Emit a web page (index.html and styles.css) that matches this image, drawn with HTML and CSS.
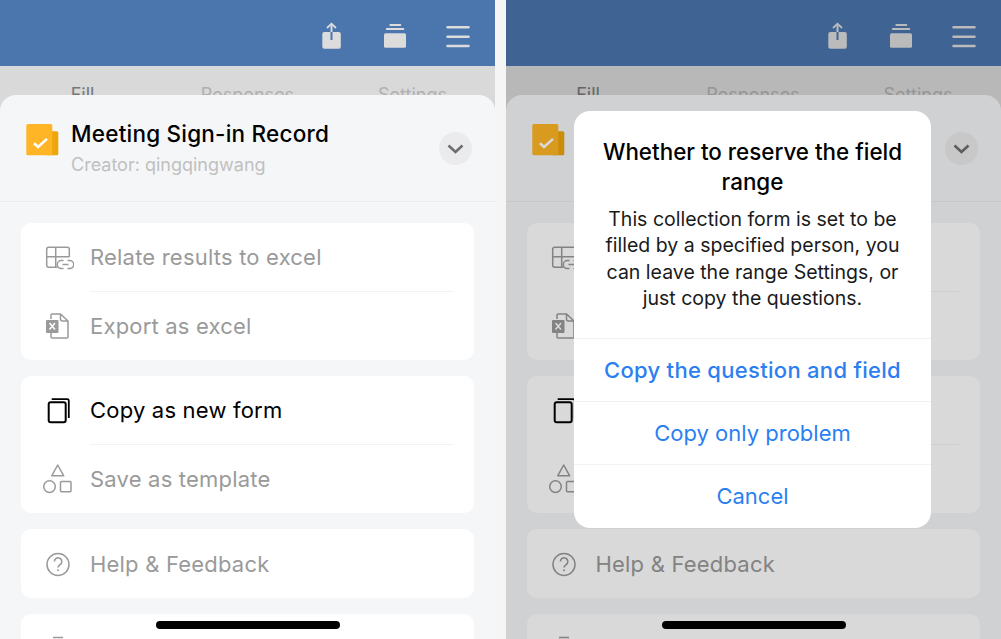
FILE: index.html
```html
<!DOCTYPE html>
<html lang="en">
<head>
<meta charset="utf-8">
<title>Meeting Sign-in Record</title>
<link rel="stylesheet" href="styles.css">
</head>
<body>
<svg class="sprite" xmlns="http://www.w3.org/2000/svg">
  <symbol id="i-share" viewBox="0 0 24 30">
    <rect x=".3" y="10" width="18.500" height="16.800" rx="2" fill="#dcdcdc"/>
    <path d="M9.500 2v8" stroke="#dcdcdc" stroke-width="2" fill="none"/>
    <path d="M9.500 10v8" stroke="currentColor" stroke-width="2" fill="none"/>
    <path d="M5 6l4.500-4.300L14 6" stroke="#dcdcdc" stroke-width="1.800" fill="none"/>
  </symbol>
  <symbol id="i-layers" viewBox="0 0 24 30">
    <rect x="0" y="11.300" width="22" height="14.500" rx="1.500" fill="#dcdcdc"/>
    <path d="M2.800 7h16.500M6.300 3h10" stroke="#dcdcdc" stroke-width="2" fill="none" stroke-linecap="round"/>
  </symbol>
  <symbol id="i-menu" viewBox="0 0 24 30">
    <path d="M1.500 5.300h21M1.500 14.700h21M1.500 24h21" stroke="#dcdcdc" stroke-width="2.500" fill="none" stroke-linecap="round"/>
  </symbol>
  <symbol id="i-doc" viewBox="0 0 33 32">
    <rect x="20" y="7.300" width="12.300" height="24" rx="1.500" fill="#eda60b"/>
    <rect x=".3" y="0" width="26" height="31.300" rx="1.500" fill="#ffb526"/>
    <path d="M8 19.300l4 3.600 9-8" stroke="#fff" stroke-width="2.600" fill="none"/>
  </symbol>
  <symbol id="i-chevron" viewBox="0 0 33 33">
    <path d="M9.500 13.500l7 6.500 7-6.500" stroke="currentColor" stroke-width="2.600" fill="none"/>
  </symbol>
  <symbol id="i-relate" viewBox="0 0 32 32">
    <path d="M15.500 26.300H6.700a2 2 0 0 1-2-2V8.300a2 2 0 0 1 2-2h18.600a2 2 0 0 1 2 2V16M4.700 15.700h22.600M13.700 6.300v20" stroke="currentColor" stroke-width="1.500" fill="none"/>
    <path d="M21.500 19.600h-2.200a4 4 0 0 0 0 8h2.200M25.500 19.600h2.200a4 4 0 0 1 0 8h-2.200M20.500 23.600h6" stroke="currentColor" stroke-width="1.500" fill="none"/>
  </symbol>
  <symbol id="i-export" viewBox="0 0 32 32">
    <path d="M9 9V5a1 1 0 0 1 1-1h8.500l7.500 7v16a1 1 0 0 1-1 1H10a1 1 0 0 1-1-1v-4M18.500 4v5a2 2 0 0 0 2 2H26" stroke="currentColor" stroke-width="1.500" fill="none"/>
    <rect x="4" y="10" width="12.500" height="13" rx="1" fill="currentColor"/>
    <path d="M7.500 13l5.500 6.500M13 13l-5.500 6.500" stroke="#fff" stroke-width="1.500" fill="none"/>
  </symbol>
  <symbol id="i-copy" viewBox="0 0 32 32">
    <rect x="6.700" y="8.300" width="17" height="20" rx="2" stroke="currentColor" stroke-width="2" fill="none"/>
    <path d="M9.700 5.200h15.600a1.500 1.500 0 0 1 1.500 1.500V24" stroke="currentColor" stroke-width="1.800" fill="none"/>
  </symbol>
  <symbol id="i-template" viewBox="0 0 32 32">
    <path d="M15.700 2l6 10.800h-12z" stroke="currentColor" stroke-width="1.500" fill="none" stroke-linejoin="round"/>
    <circle cx="7.500" cy="23.600" r="5.800" stroke="currentColor" stroke-width="1.500" fill="none"/>
    <rect x="18.500" y="18.500" width="10.500" height="10.300" rx="1" stroke="currentColor" stroke-width="1.500" fill="none"/>
  </symbol>
  <symbol id="i-help" viewBox="0 0 32 32">
    <circle cx="16" cy="16.500" r="11" stroke="currentColor" stroke-width="1.500" fill="none"/>
    <path d="M12.400 13.500a3.700 3.700 0 1 1 5.700 3.100c-1.300.9-2.100 1.500-2.100 3" stroke="currentColor" stroke-width="1.600" fill="none"/>
    <circle cx="16" cy="22.300" r="1" fill="currentColor"/>
  </symbol>
  <symbol id="i-trash" viewBox="0 0 32 32">
    <path d="M11 4.500h10M5 9h22" stroke="currentColor" stroke-width="1.500" fill="none"/>
  </symbol>
</svg>

<main class="stage">
  <section class="phone">
    <header class="topbar">
      <svg class="bar-icon"><use href="#i-share"/></svg>
      <svg class="bar-icon"><use href="#i-layers"/></svg>
      <svg class="bar-icon"><use href="#i-menu"/></svg>
    </header>
    <nav class="tabs">
      <span class="tab tab-active">Fill</span>
      <span class="tab">Responses</span>
      <span class="tab">Settings</span>
    </nav>
    <div class="sheet">
      <div class="sheet-head">
        <svg class="doc-icon"><use href="#i-doc"/></svg>
        <div class="head-text">
          <h1 class="title">Meeting Sign-in Record</h1>
          <p class="creator">Creator: qingqingwang</p>
        </div>
        <button class="expand"><svg class="chevron"><use href="#i-chevron"/></svg></button>
      </div>
      <div class="cards">
        <div class="card">
          <div class="row"><svg class="row-icon"><use href="#i-relate"/></svg><span class="row-label">Relate results to excel</span></div>
          <div class="row row-split"><svg class="row-icon"><use href="#i-export"/></svg><span class="row-label">Export as excel</span></div>
        </div>
        <div class="card">
          <div class="row row-on"><svg class="row-icon"><use href="#i-copy"/></svg><span class="row-label">Copy as new form</span></div>
          <div class="row row-split"><svg class="row-icon"><use href="#i-template"/></svg><span class="row-label">Save as template</span></div>
        </div>
        <div class="card">
          <div class="row row-single"><svg class="row-icon"><use href="#i-help"/></svg><span class="row-label">Help &amp; Feedback</span></div>
        </div>
        <div class="card">
          <div class="row row-single"><svg class="row-icon"><use href="#i-trash"/></svg></div>
        </div>
      </div>
    </div>
    <div class="home-bar"></div>
  </section>

  <section class="phone">
    <header class="topbar">
      <svg class="bar-icon"><use href="#i-share"/></svg>
      <svg class="bar-icon"><use href="#i-layers"/></svg>
      <svg class="bar-icon"><use href="#i-menu"/></svg>
    </header>
    <nav class="tabs">
      <span class="tab tab-active">Fill</span>
      <span class="tab">Responses</span>
      <span class="tab">Settings</span>
    </nav>
    <div class="sheet">
      <div class="sheet-head">
        <svg class="doc-icon"><use href="#i-doc"/></svg>
        <div class="head-text">
          <h2 class="title">Meeting Sign-in Record</h2>
          <p class="creator">Creator: qingqingwang</p>
        </div>
        <button class="expand"><svg class="chevron"><use href="#i-chevron"/></svg></button>
      </div>
      <div class="cards">
        <div class="card">
          <div class="row"><svg class="row-icon"><use href="#i-relate"/></svg><span class="row-label">Relate results to excel</span></div>
          <div class="row row-split"><svg class="row-icon"><use href="#i-export"/></svg><span class="row-label">Export as excel</span></div>
        </div>
        <div class="card">
          <div class="row row-on"><svg class="row-icon"><use href="#i-copy"/></svg><span class="row-label">Copy as new form</span></div>
          <div class="row row-split"><svg class="row-icon"><use href="#i-template"/></svg><span class="row-label">Save as template</span></div>
        </div>
        <div class="card">
          <div class="row row-single"><svg class="row-icon"><use href="#i-help"/></svg><span class="row-label">Help &amp; Feedback</span></div>
        </div>
        <div class="card">
          <div class="row row-single"><svg class="row-icon"><use href="#i-trash"/></svg></div>
        </div>
      </div>
    </div>
    <div class="overlay">
      <div class="dialog">
        <div class="dialog-body">
          <h2 class="dialog-title">Whether to reserve the field range</h2>
          <p class="dialog-text">This collection form is set to be filled by a specified person, you can leave the range Settings, or just copy the questions.</p>
        </div>
        <button class="dialog-btn dialog-btn-strong">Copy the question and field</button>
        <button class="dialog-btn">Copy only problem</button>
        <button class="dialog-btn dialog-btn-last">Cancel</button>
      </div>
    </div>
    <div class="home-bar"></div>
  </section>
</main>
</body>
</html>
```
FILE: styles.css
```css
* { box-sizing: border-box; }
html, body { margin: 0; padding: 0; }
body {
  width: 1001px;
  height: 639px;
  overflow: hidden;
  background: #f5f5f5;
  font-family: Inter, "Noto Sans", "Liberation Sans", sans-serif;
}
.sprite { display: none; }
.stage { display: flex; gap: 10.5px; height: 639px; }
.phone {
  position: relative;
  flex: 0 0 495px;
  height: 639px;
  overflow: hidden;
  background: #d9d9d9;
}
.topbar {
  height: 66px;
  background: #4a75ad;
  color: #4a75ad;
  display: flex;
  justify-content: flex-end;
  gap: 38px;
  padding: 22px 25px 0 0;
}
.bar-icon { width: 24px; height: 30px; flex: none; }
.tabs {
  height: 29px;
  overflow: hidden;
  display: grid;
  grid-template-columns: repeat(3, 1fr);
  padding-top: 17px;
  text-align: center;
  font-size: 18px;
  line-height: 24px;
  color: #b0b0b0;
}
.tab-active { color: #777; }
.sheet {
  height: 560px;
  background: #f5f6f8;
  border-radius: 16px 16px 0 0;
}
.sheet-head {
  height: 107px;
  border-bottom: 1px solid #e9eaec;
  display: flex;
  align-items: flex-start;
  padding: 24px 23px 0 26px;
}
.doc-icon { width: 33px; height: 32px; margin-top: 5px; flex: none; }
.head-text { margin-left: 12px; }
.title {
  margin: 0;
  font-size: 22.500px;
  line-height: 30px;
  font-weight: 500;
  letter-spacing: .22px;
  color: #000;
}
.creator {
  margin: 4px 0 0;
  font-size: 18px;
  line-height: 24px;
  color: #c0c0c0;
}
.expand {
  margin: 13px 0 0 auto;
  width: 33px;
  height: 33px;
  padding: 0;
  border: 0;
  border-radius: 50%;
  background: #ebebed;
  color: #6e6e6e;
}
.chevron { display: block; width: 33px; height: 33px; }
.cards {
  display: flex;
  flex-direction: column;
  gap: 16px;
  padding: 21px 21px 0;
}
.card { background: #fff; border-radius: 10px; padding: 0 21px; }
.row {
  height: 68px;
  display: flex;
  align-items: center;
  gap: 16px;
  color: #9a9a9a;
}
.row-split {
  height: 69px;
  position: relative;
  padding-top: 1px;
}
.row-split::before {
  content: "";
  position: absolute;
  top: 0;
  left: 48px;
  right: 0;
  height: 1px;
  background: #f2f2f2;
}
.row-single { height: 69px; }
.row-on { color: #000; }
.row-icon { width: 32px; height: 32px; flex: none; }
.row-label { font-size: 22px; line-height: 30px; letter-spacing: .2px; }
.overlay {
  position: absolute;
  inset: 0;
  background: rgba(0, 0, 0, .15);
  display: flex;
  justify-content: center;
  align-items: flex-start;
  padding: 111px 1px 0 0;
}
.dialog {
  width: 357px;
  background: #fff;
  border-radius: 16px;
  overflow: hidden;
  display: flex;
  flex-direction: column;
}
.dialog-body { height: 227px; padding: 26px 20px 0; text-align: center; }
.dialog-title {
  margin: 0 0 9px;
  font-size: 22.400px;
  line-height: 30px;
  font-weight: 500;
  color: #000;
}
.dialog-text {
  margin: 0;
  font-size: 19.500px;
  line-height: 26.300px;
  color: #1a1a1a;
}
.dialog-btn {
  height: 63px;
  padding: 0;
  border: 0;
  border-top: 1px solid #f2f2f2;
  background: none;
  font: inherit;
  font-size: 22px;
  color: #2b7ff0;
}
.dialog-btn-strong { font-weight: 500; letter-spacing: .3px; }
.dialog-btn-last { height: 64px; padding-bottom: 2px; }
.home-bar {
  position: absolute;
  left: 156px;
  top: 621px;
  width: 184px;
  height: 8px;
  border-radius: 4px;
  background: #000;
}
```
